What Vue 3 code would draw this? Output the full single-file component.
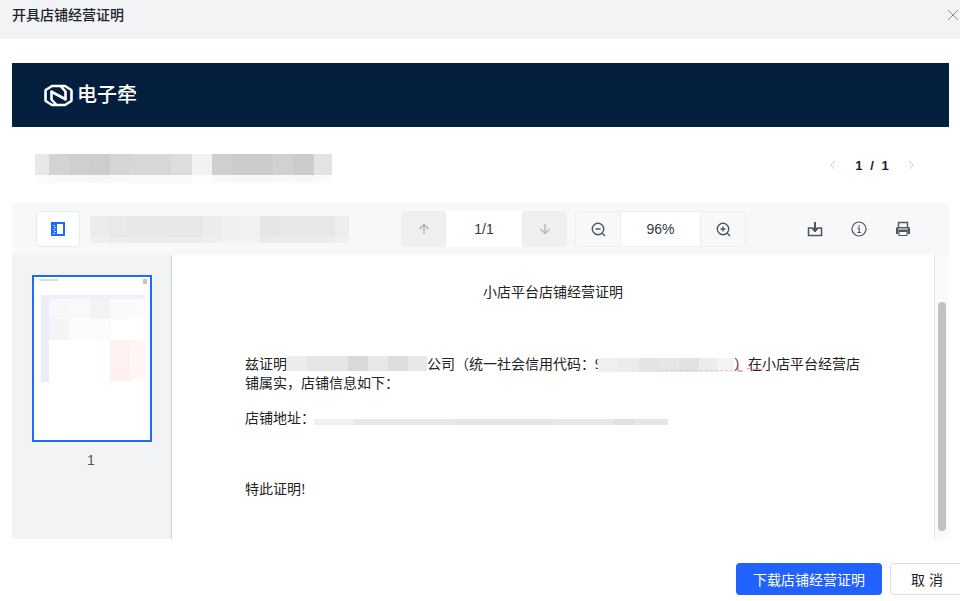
<script setup>
const titleCells = [[14,'#e8e8e8'],[20,'#d3d3d3'],[20,'#cfcfcf'],[21,'#cdcdcd'],[20,'#d5d5d5'],[41,'#d7d7d7'],[21,'#dddddd'],[20,'#f2f2f2'],[20,'#cfcfcf'],[41,'#cccccc'],[20,'#d1d1d1'],[21,'#cccccc'],[18,'#e3e3e3']]
const nameCells = [[20,'#ebecee'],[20,'#e8e9eb'],[41,'#e6e7e9'],[40,'#e7e8ea'],[20,'#ebecee'],[21,'#eef0f2'],[20,'#f0f1f3'],[20,'#e5e6e8'],[61,'#e6e7e9'],[15,'#ecedef']]
const companyCells = [[20,'#ececec'],[41,'#e6e6e6'],[20,'#d9d9d9'],[20,'#e8e8e8'],[20,'#dedede'],[19,'#e8e8e8']]
const codeCells = [[20,'#efefef'],[20,'#ececec'],[20,'#e4e4e4'],[20,'#e6e6e6'],[20,'#e2e2e2'],[17,'#ececec'],[17,'#f4f4f4']]
const addressCells = [[40,'#efefef'],[100,'#e8e8e8'],[100,'#e5e5e5'],[60,'#e8e8e8'],[20,'#e0e0e0'],[34,'#e6e6e6']]
</script>

<template>
  <div class="dialog">
    <header class="dialog-head">
      <h1>开具店铺经营证明</h1>
      <svg class="close" width="12" height="12" viewBox="0 0 12 12"><path d="M1 1l10 10M11 1L1 11" stroke="#8a8f99" stroke-width="1" fill="none"/></svg>
    </header>

    <main class="dialog-body">
      <div class="banner">
        <svg width="29" height="23" viewBox="0 0 29 23" fill="none" stroke="#fff" stroke-width="2.600" stroke-linejoin="round" stroke-linecap="round">
          <path d="M16 2H8L2.500 5.500a1.500 1.500 0 0 0-1 1.500v9a1.500 1.500 0 0 0 1 1.500L8 21h4.500L7.500 15.500V7.500"/>
          <path d="M13 21h8l5.500-3.500a1.500 1.500 0 0 0 1-1.500V7a1.500 1.500 0 0 0-1-1.500L21 2h-4.500L21.500 7.500V15.500"/>
          <path d="M8 8L21 15"/>
        </svg>
        <span class="brand">电子牵</span>
      </div>

      <div class="doc-title">
        <div class="blur title-blur">
          <div class="mosaic"><i v-for="(c, i) in titleCells" :key="i" :style="{ flex: c[0], background: c[1] }"></i></div>
          <div class="mosaic faint"><i v-for="(c, i) in titleCells" :key="i" :style="{ flex: c[0], background: c[1] }"></i></div>
        </div>
        <div class="pager">
          <svg width="6" height="10" viewBox="0 0 6 10"><path d="M5 1L1 5l4 4" stroke="#c9cdd4" fill="none"/></svg>
          <span class="pager-text">1 / 1</span>
          <svg width="6" height="10" viewBox="0 0 6 10"><path d="M1 1l4 4-4 4" stroke="#c9cdd4" fill="none"/></svg>
        </div>
      </div>

      <div class="toolbar">
        <button class="side-btn">
          <svg width="14" height="14" viewBox="0 0 14 14" shape-rendering="crispEdges">
            <rect x="0" y="0" width="14" height="14" rx="1" fill="#1a6cff"/>
            <rect x="6" y="2" width="6" height="10" fill="#fff"/>
            <path d="M2 3h2M3 5h2M2 7h2M3 9h2M2 11h2" stroke="#b4d0ff"/>
          </svg>
        </button>
        <div class="blur name-blur">
          <div class="mosaic"><i v-for="(c, i) in nameCells" :key="i" :style="{ flex: c[0], background: c[1] }"></i></div>
          <div class="mosaic faint"><i v-for="(c, i) in nameCells" :key="i" :style="{ flex: c[0], background: c[1] }"></i></div>
        </div>
        <div class="page-group">
          <span class="step">
            <svg width="12" height="12" viewBox="0 0 12 12"><path d="M6 11V1.500M1.500 6L6 1.500 10.500 6" stroke="#a8acb4" stroke-width="1.200" fill="none"/></svg>
          </span>
          <span class="value page-value">1/1</span>
          <span class="step">
            <svg width="12" height="12" viewBox="0 0 12 12"><path d="M6 1v9.500M1.500 6L6 10.500 10.500 6" stroke="#a8acb4" stroke-width="1.200" fill="none"/></svg>
          </span>
        </div>
        <div class="zoom-group">
          <span class="zoom-btn">
            <svg width="15" height="15" viewBox="0 0 15 15" fill="none" stroke="#4e5561" stroke-width="1.400"><circle cx="7" cy="7" r="5.700"/><path d="M11 11l3 3M4.500 7h5"/></svg>
          </span>
          <span class="value zoom-value">96%</span>
          <span class="zoom-btn">
            <svg width="15" height="15" viewBox="0 0 15 15" fill="none" stroke="#4e5561" stroke-width="1.400"><circle cx="7" cy="7" r="5.700"/><path d="M11 11l3 3M4.500 7h5M7 4.500v5"/></svg>
          </span>
        </div>
        <div class="actions">
          <svg width="16" height="16" viewBox="0 0 16 16" fill="none" stroke="#4e5561" stroke-width="1.500"><path d="M5 7H1.500v7.500h13V7H11"/><path d="M8 1v9" stroke-width="2"/><path d="M4.500 7L8 11l3.500-4z" fill="#4e5561" stroke-width="1"/></svg>
          <svg width="16" height="16" viewBox="0 0 16 16" fill="none" stroke="#4e5561" stroke-width="1.200"><circle cx="8" cy="8" r="7"/><path d="M6.500 7H8.200V11.500M6.300 11.500h3.800M8 4v1.500"/></svg>
          <svg width="16" height="16" viewBox="0 0 16 16"><path d="M3.500 6.500V1.500h9v5" fill="none" stroke="#4e5561" stroke-width="1.400"/><path d="M2.500 6h11a1.500 1.500 0 0 1 1.500 1.500V13h-2.500v-3h-9v3H1V7.500A1.500 1.500 0 0 1 2.500 6z" fill="#4e5561"/><rect x="4" y="10.500" width="8" height="4" fill="#fff" stroke="#4e5561"/><path d="M3 8h10" stroke="#fff"/></svg>
        </div>
      </div>

      <div class="viewer">
        <aside class="thumbs">
          <div class="thumb">
            <svg width="116" height="163" viewBox="0 0 116 163" shape-rendering="crispEdges">
              <rect x="5" y="2" width="19" height="2" fill="#dcdcdc"/>
              <rect x="109" y="2" width="4" height="5" fill="#c4c4c4"/>
              <rect x="7" y="18" width="104" height="4" fill="#eef0fb"/>
              <rect x="7" y="22" width="8" height="83" fill="#eaedfb"/>
              <rect x="15" y="22" width="21" height="20" fill="#f8f8f8"/>
              <rect x="36" y="22" width="20" height="20" fill="#faf8f8"/>
              <rect x="56" y="22" width="20" height="20" fill="#f3f3f3"/>
              <rect x="76" y="22" width="20" height="20" fill="#fafafa"/>
              <rect x="96" y="22" width="15" height="20" fill="#fcfbfb"/>
              <rect x="15" y="42" width="20" height="21" fill="#f4f4f4"/>
              <rect x="35" y="42" width="42" height="21" fill="#fcfcfc"/>
              <rect x="76" y="63" width="23" height="41" fill="#fff1f0"/>
              <rect x="96" y="63" width="15" height="39" fill="#fff6f5"/>
            </svg>
          </div>
          <div class="thumb-no">1</div>
        </aside>
        <section class="page">
          <h2>小店平台店铺经营证明</h2>
          <div class="line first">
            <span>兹证明</span>
            <div class="mosaic company"><i v-for="(c, i) in companyCells" :key="i" :style="{ flex: c[0], background: c[1] }"></i></div>
            <span>公司（统一社会信用代码：</span>
            <span>9</span>
            <div class="mosaic code"><i v-for="(c, i) in codeCells" :key="i" :style="{ flex: c[0], background: c[1] }"></i></div>
            <span>）在小店平台经营店</span>
            <svg class="ink" width="115" height="20" viewBox="0 0 115 20" fill="none">
              <path d="M5 15.500h73" stroke="#f7c4c4" stroke-dasharray="3 2"/>
              <path d="M83 10v6h5" stroke="#ee5a5a"/>
              <path d="M92 14q2-2 4 0t4 0t4 0t4 0" stroke="#ee5a5a" stroke-width="0.800"/>
            </svg>
          </div>
          <p class="line second">铺属实，店铺信息如下：</p>
          <div class="line address">
            <span>店铺地址：</span>
            <div class="mosaic addr"><i v-for="(c, i) in addressCells" :key="i" :style="{ flex: c[0], background: c[1] }"></i></div>
          </div>
          <p class="line closing">特此证明!</p>
        </section>
        <div class="scrollbar"><div class="scroll-thumb"></div></div>
      </div>
    </main>

    <footer class="dialog-foot">
      <button class="primary">下载店铺经营证明</button>
      <button class="ghost">取 消</button>
    </footer>
  </div>
</template>

<style scoped>
.dialog {
  width: 960px;
  height: 601px;
  overflow: hidden;
  display: flex;
  flex-direction: column;
  background: #fff;
  font-family: "Liberation Sans", "Noto Sans CJK SC", sans-serif;
  color: #1d2129;
}
.dialog-head {
  height: 39px;
  flex: none;
  background: #f2f3f5;
  display: flex;
  align-items: flex-start;
  justify-content: space-between;
  padding: 7px 1px 0 12px;
  box-sizing: border-box;
}
.dialog-head h1 {
  margin: 0;
  font-size: 14px;
  line-height: 16px;
  font-weight: 500;
}
.close { margin-top: 2px; }
.dialog-body {
  flex: none;
  padding: 24px 11px 0 12px;
}
.banner {
  height: 64px;
  background: #031f3d;
  display: flex;
  align-items: center;
  padding-left: 32px;
  gap: 4px;
}
.brand {
  color: #fff;
  font-size: 20px;
  font-weight: 500;
  line-height: 24px;
}
.doc-title {
  height: 76px;
  display: flex;
  align-items: flex-start;
  justify-content: space-between;
  padding: 27px 35px 0 23px;
  box-sizing: border-box;
}
.mosaic { display: flex; }
.mosaic i { display: block; height: 100%; }
.faint { opacity: 0.22; }
.title-blur { width: 297px; }
.title-blur .mosaic:first-child { height: 21px; }
.title-blur .faint { height: 8px; opacity: 0.12; }
.pager {
  display: flex;
  align-items: center;
  gap: 19px;
  height: 22px;
  font-size: 13px;
  font-weight: 700;
}
.pager-text {
  width: 34px;
  white-space: nowrap;
  text-align: center;
  word-spacing: 4px;
}
.toolbar {
  height: 52px;
  background: #f7f8fa;
  display: flex;
  align-items: center;
  padding-left: 24px;
  box-sizing: border-box;
}
.side-btn {
  width: 44px;
  height: 36px;
  padding: 0;
  background: #fff;
  border: 1px solid #e9ebef;
  border-radius: 4px;
  display: flex;
  align-items: center;
  justify-content: center;
}
.name-blur { width: 259px; margin-left: 10px; }
.name-blur .mosaic:first-child { height: 21px; }
.name-blur .faint { height: 6px; opacity: 0.7; }
.page-group, .zoom-group {
  height: 36px;
  display: flex;
  border-radius: 4px;
  overflow: hidden;
  box-sizing: border-box;
}
.page-group { margin-left: 52px; width: 166px; background: #eeeff1; }
.step { width: 45px; flex: none; display: flex; align-items: center; justify-content: center; }
.value {
  background: #fff;
  display: flex;
  align-items: center;
  justify-content: center;
  font-size: 14px;
  color: #333841;
}
.page-value { width: 76px; }
.zoom-group { margin-left: 8px; width: 171px; border: 1px solid #eceef1; }
.zoom-btn { width: 44px; flex: none; display: flex; align-items: center; justify-content: center; }
.zoom-value { width: 81px; border-left: 1px solid #eceef1; border-right: 1px solid #eceef1; }
.actions {
  margin-left: 61px;
  display: flex;
  gap: 28px;
  align-items: center;
}
.viewer {
  height: 284px;
  display: flex;
}
.thumbs {
  width: 160px;
  flex: none;
  box-sizing: border-box;
  background: #f2f3f5;
  border-right: 1px solid #cfcfcf;
  padding: 20px 0 0 20px;
}
.thumb {
  width: 120px;
  height: 167px;
  box-sizing: border-box;
  border: 2px solid #1a6cff;
  background: #fff;
}
.thumb svg { display: block; }
.thumb-no {
  width: 118px;
  margin-top: 10px;
  text-align: center;
  font-size: 14px;
  line-height: 16px;
  color: #4e5561;
}
.page {
  flex: 1;
  min-width: 0;
  background: #fff;
  overflow: hidden;
  padding-left: 73px;
  font-family: "Liberation Serif", "Noto Sans CJK SC", serif;
  font-size: 14px;
  color: #222;
}
.page h2 {
  margin: 29px 0 0;
  width: 616px;
  text-align: center;
  font-size: 14px;
  line-height: 18px;
  font-weight: 400;
}
.line {
  margin: 0;
  line-height: 18px;
  white-space: nowrap;
  display: flex;
  align-items: center;
}
.first { margin-top: 54px; position: relative; }
.second { margin-top: 1px; }
.address { margin-top: 17px; }
.closing { margin-top: 53px; }
.company { width: 140px; height: 15px; margin-top: -4px; }
.code { width: 136px; height: 14px; margin-left: -4px; z-index: 1; }
.addr { width: 354px; height: 6px; margin: 6px 0 0 -1px; }
.ink { position: absolute; left: 410px; top: -1px; z-index: 2; }
.scrollbar {
  width: 15px;
  flex: none;
  box-sizing: border-box;
  border-left: 1px solid #e6e6e6;
  background: #fafafa;
  padding: 47px 3px 0 3px;
}
.scroll-thumb {
  width: 8px;
  height: 229px;
  border-radius: 4px;
  background: #c1c1c1;
}
.dialog-foot {
  flex: none;
  display: flex;
  justify-content: flex-end;
  gap: 8px;
  padding-top: 24px;
  margin-right: -4px;
}
.dialog-foot button {
  height: 32px;
  font-family: inherit;
  font-size: 14px;
  border-radius: 4px;
  padding: 0;
}
.primary {
  width: 146px;
  background: #2162ff;
  border: none;
  color: #fff;
}
.ghost {
  width: 74px;
  background: #fff;
  border: 1px solid #dcdee2;
  color: #1d2129;
}
</style>
